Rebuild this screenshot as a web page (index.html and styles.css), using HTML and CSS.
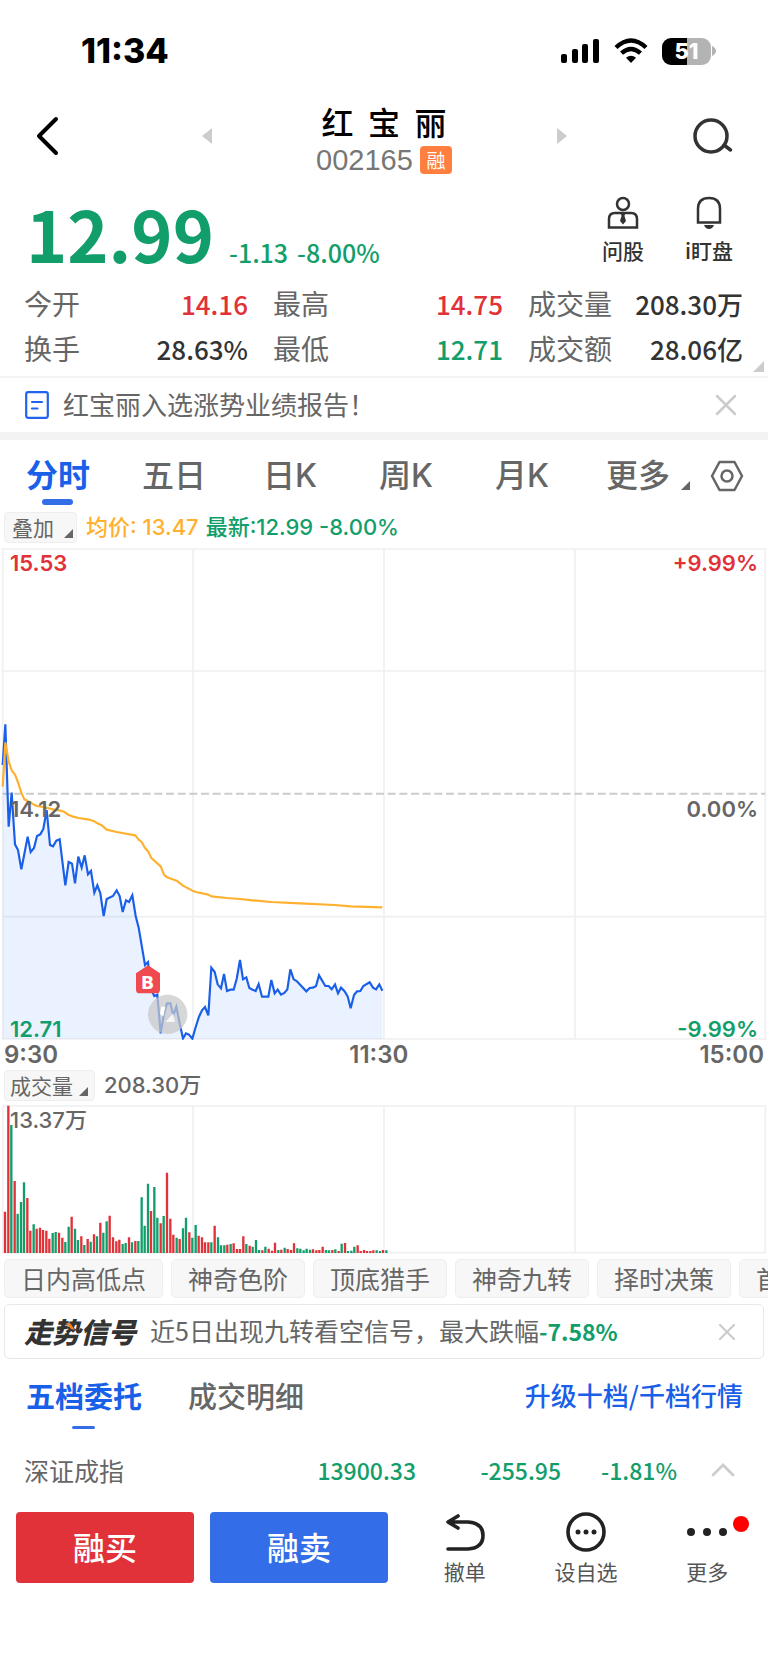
FILE: index.html
```html
<!DOCTYPE html>
<html lang="zh-CN">
<head>
<meta charset="utf-8">
<meta name="viewport" content="width=device-width, initial-scale=1">
<title>红宝丽 002165</title>
<link rel="stylesheet" href="styles.css">
</head>
<body>
<div class="status">
  <span class="clock">11:34</span>
  <div class="status-icons">
    <svg width="40" height="26" viewBox="0 0 40 26"><rect x="1" y="16" width="6" height="9" rx="2"/><rect x="12" y="11" width="6" height="14" rx="2"/><rect x="22" y="6" width="6" height="19" rx="2"/><rect x="33" y="1" width="6" height="24" rx="2"/></svg>
    <svg class="wifi" width="34" height="26" viewBox="0 0 34 26"><g fill="none" stroke="#000" stroke-width="4.4"><path d="M2 9.500Q17-4.500 32 9.500"/><path d="M7.500 15.200Q17 6.800 26.500 15.200"/></g><path d="M12 19.800Q17 15.800 22 19.800L17 25z"/></svg>
    <span class="battery"><span class="level">51</span><svg width="4" height="10" viewBox="0 0 4 10"><path d="M0 0Q4 2 4 5T0 10z" fill="#b3b3b3"/></svg></span>
  </div>
</div>

<header class="head">
  <button class="icon-btn" aria-label="返回"><svg width="24" height="40" viewBox="0 0 24 40"><path d="M21 3L4 20L21 37" fill="none" stroke="#000" stroke-width="4" stroke-linecap="round" stroke-linejoin="round"/></svg></button>
  <div class="switcher">
    <button class="icon-btn" aria-label="上一只"><svg width="10" height="16" viewBox="0 0 10 16"><path d="M10 0V16L0 8z" fill="#ccc"/></svg></button>
    <div class="title">
      <h1>红&nbsp; 宝&nbsp; 丽</h1>
      <div class="code"><span>002165</span><span class="badge">融</span></div>
    </div>
    <button class="icon-btn" aria-label="下一只"><svg width="10" height="16" viewBox="0 0 10 16"><path d="M0 0V16L10 8z" fill="#ccc"/></svg></button>
  </div>
  <button class="icon-btn search" aria-label="搜索"><svg width="40" height="38" viewBox="0 0 40 38"><g fill="none" stroke="#333" stroke-width="3.500" stroke-linecap="round"><circle cx="18" cy="19" r="16"/><path d="M31 28L37.500 33"/></g></svg></button>
</header>

<section class="quote">
  <div class="price"><strong>12.99</strong><span>-1.13</span><span>-8.00%</span></div>
  <div class="quick">
    <button><svg width="32" height="34" viewBox="0 0 32 34"><g fill="none" stroke="#333" stroke-width="2.500"><circle cx="16" cy="8" r="6"/><path d="M2 31.500V23Q2 17 8 17H24Q30 17 30 23V31.500z"/></g><path d="M14 18H18L17.500 20L19 25L16 28.500L13 25L14.500 20z" fill="#333"/></svg>问股</button>
    <button><svg width="28" height="34" viewBox="0 0 28 34"><path d="M3 26.500V13Q3 2 14 2T25 13V26.500z" fill="none" stroke="#333" stroke-width="2.500"/><path d="M9 29H19Q17.500 33 14 33T9 29z" fill="#333"/></svg>i盯盘</button>
  </div>
</section>

<dl class="stats">
  <div><dt>今开</dt><dd class="up">14.16</dd></div>
  <div><dt>最高</dt><dd class="up">14.75</dd></div>
  <div><dt>成交量</dt><dd>208.30万</dd></div>
  <div><dt>换手</dt><dd>28.63%</dd></div>
  <div><dt>最低</dt><dd class="down">12.71</dd></div>
  <div><dt>成交额</dt><dd>28.06亿</dd></div>
  <svg class="corner" width="11" height="11" viewBox="0 0 11 11"><path d="M11 0V11H0z" fill="#ccc"/></svg>
</dl>

<div class="notice">
  <svg width="24" height="28" viewBox="0 0 24 28"><g fill="none" stroke="#2163ee" stroke-width="2.200" stroke-linecap="round"><rect x="1.200" y="1.200" width="21.600" height="25.600" rx="2"/><path d="M7 11H17M7 17.500H12.500"/></g></svg>
  <a href="#">红宝丽入选涨势业绩报告！</a>
  <button class="icon-btn" aria-label="关闭"><svg width="22" height="22" viewBox="0 0 22 22"><path d="M2 2L20 20M20 2L2 20" stroke="#ccc" stroke-width="2.500" stroke-linecap="round"/></svg></button>
</div>

<nav class="periods">
  <button class="on">分时</button>
  <button>五日</button>
  <button>日K</button>
  <button>周K</button>
  <button>月K</button>
  <button class="more">更多<svg width="9" height="9" viewBox="0 0 9 9"><path d="M9 0V9H0z" fill="#666"/></svg></button>
  <button class="gear" aria-label="设置"><svg width="34" height="32" viewBox="0 0 34 32"><g fill="none" stroke="#666" stroke-width="2.500"><path d="M9.500 2H24.500L32 16L24.500 30H9.500L2 16z" stroke-linejoin="round"/><circle cx="17" cy="16" r="5.500"/></g></svg></button>
</nav>

<div class="info">
  <button class="drop">叠加<svg width="9" height="9" viewBox="0 0 9 9"><path d="M9 0V9H0z" fill="#666"/></svg></button>
  <span class="avg">均价: 13.47</span>
  <span class="down">最新:12.99 -8.00%</span>
</div>

<div class="chart">
  <svg viewBox="0 0 2304 1476" role="img" aria-label="分时走势">
    <g fill="none" stroke="#f0f0f0" stroke-width="5">
      <path d="M8 3H2296V1473H8zM8 369H2296M8 1106H2296M579 3V1473M1152 3V1473M1725 3V1473"/>
    </g>
    <path d="M8 737H2296" stroke="#ccc" stroke-width="6" stroke-dasharray="24 11"/>
    <polygon id="area" fill="#1a5fff" fill-opacity=".09"/>
    <polyline id="price" fill="none" stroke="#1a5fe8" stroke-width="6.500" stroke-linejoin="miter"/>
    <polyline id="avg" fill="none" stroke="#ffb02e" stroke-width="6.500" stroke-linejoin="round"/>
    <circle cx="503" cy="1399" r="59" fill="#c8c8c8" fill-opacity=".72"/>
    <path d="M480 1398L484 1376L496 1376L490 1405z" fill="#fff"/>
    <path d="M496 1422L520 1396L524 1422z" fill="#fff" fill-opacity=".8"/>
    <path d="M444 1252L480 1276V1325Q480 1336 469 1336H419Q408 1336 408 1325V1276z" fill="#ef4a50"/>
    <text class="mark" x="443" y="1322" text-anchor="middle">B</text>
  </svg>
  <span class="lab tl up">15.53</span><span class="lab tr up">+9.99%</span>
  <span class="lab ml">14.12</span><span class="lab mr">0.00%</span>
  <span class="lab bl down">12.71</span><span class="lab br down">-9.99%</span>
</div>
<div class="times"><span>9:30</span><span>11:30</span><span>15:00</span></div>

<div class="info vol-info">
  <button class="drop">成交量<svg width="9" height="9" viewBox="0 0 9 9"><path d="M9 0V9H0z" fill="#666"/></svg></button>
  <span>208.30万</span>
</div>
<div class="chart volume">
  <svg viewBox="0 0 2304 447" role="img" aria-label="成交量">
    <path d="M8 3H2296V443H8zM579 3V443M1152 3V443M1725 3V443" fill="none" stroke="#f0f0f0" stroke-width="5"/>
    <g stroke-width="7"><path id="vup" stroke="#e03238"/><path id="vdown" stroke="#129e6a"/></g>
  </svg>
  <span class="lab tl">13.37万</span>
</div>

<div class="chips">
  <button>日内高低点</button><button>神奇色阶</button><button>顶底猎手</button><button>神奇九转</button><button>择时决策</button><button>首板挖掘</button>
</div>

<div class="signal">
  <span class="logo">走势信号<svg width="9" height="8" viewBox="0 0 9 8"><path d="M0 0H4L9 7L5 6z" fill="#f58220"/></svg></span>
  <a href="#">近5日出现九转看空信号，最大跌幅<b>-7.58%</b></a>
  <button class="icon-btn" aria-label="关闭"><svg width="18" height="18" viewBox="0 0 18 18"><path d="M2 2L16 16M16 2L2 16" stroke="#ccc" stroke-width="2.200" stroke-linecap="round"/></svg></button>
</div>

<nav class="depth">
  <button class="on">五档委托</button>
  <button>成交明细</button>
  <a href="#">升级十档/千档行情</a>
</nav>

<div class="index">
  <span class="name">深证成指</span>
  <b>13900.33</b><b>-255.95</b><b class="rate">-1.81%</b>
  <button class="icon-btn" aria-label="展开"><svg width="24" height="15" viewBox="0 0 24 15"><path d="M2 13L12 3L22 13" fill="none" stroke="#ccc" stroke-width="2.800" stroke-linecap="round"/></svg></button>
</div>

<footer class="actions">
  <button class="trade buy">融买</button>
  <button class="trade sell">融卖</button>
  <div class="tools">
    <button><svg width="40" height="40" viewBox="0 0 40 40"><g fill="none" stroke="#222" stroke-width="3.600" stroke-linecap="round" stroke-linejoin="round"><path d="M13 4L3 10L13 16M4 10H23Q38 11 38 23.500T23 37H3"/></g></svg>撤单</button>
    <button><svg width="40" height="40" viewBox="0 0 40 40"><circle cx="20" cy="20" r="18" fill="none" stroke="#222" stroke-width="3.600"/><g fill="#222"><circle cx="12" cy="20" r="2.500"/><circle cx="20" cy="20" r="2.500"/><circle cx="28" cy="20" r="2.500"/></g></svg>设自选</button>
    <button><svg width="40" height="40" viewBox="0 0 40 40"><g fill="#222"><circle cx="4" cy="20" r="4"/><circle cx="20" cy="20" r="4"/><circle cx="36" cy="20" r="4"/></g></svg>更多<i class="dot"></i></button>
  </div>
</footer>
<script src="chart.js"></script>
</body>
</html>
```
FILE: styles.css
```css
* { box-sizing: border-box; }
body {
  margin: 0;
  background: #fff;
  color: #333;
  font-family: "Noto Sans CJK SC", sans-serif;
  overflow-x: hidden;
}
button {
  border: 0;
  padding: 0;
  background: none;
  color: inherit;
  font: inherit;
  white-space: nowrap;
}
a { color: inherit; text-decoration: none; }
svg { display: block; flex: none; }
h1, dl, dd { margin: 0; }
.up { color: #e03238; }
.down { color: #129e6a; }
.icon-btn { display: flex; }

.status {
  display: flex;
  justify-content: space-between;
  align-items: center;
  height: 102px;
  padding: 0 52px 0 81px;
}
.clock { font: 800 34px/40px Inter, sans-serif; color: #000; }
.status-icons { display: flex; align-items: center; gap: 14px; }
.battery { display: flex; align-items: center; gap: 1px; }
.level {
  width: 49px;
  height: 27px;
  border-radius: 9px;
  background: linear-gradient(90deg, #000 51%, #b3b3b3 51%);
  color: #fff;
  font: 800 22px/27px Inter, sans-serif;
  text-align: center;
}

.head {
  display: grid;
  grid-template-columns: 1fr 365px 1fr;
  height: 84px;
  padding: 0 35px;
}
.head .icon-btn { align-items: center; height: 68px; }
.switcher { display: flex; justify-content: space-between; }
.search { justify-self: end; }
.title { text-align: center; }
.title h1 { font: 500 32px/39px "Noto Sans CJK SC", sans-serif; color: #000; }
.code {
  display: flex;
  align-items: center;
  gap: 7px;
  font: 29px/38px "Liberation Sans", sans-serif;
  color: #777;
}
.badge {
  width: 32px;
  border-radius: 4px;
  background: #ff7f40;
  color: #fff;
  font: 19px/28px "Noto Sans CJK SC", sans-serif;
  text-align: center;
}

.quote {
  display: flex;
  justify-content: space-between;
  height: 92px;
  padding: 0 35px 0 26px;
}
.price {
  display: flex;
  align-items: baseline;
  gap: 9px;
  color: #129e6a;
  font-size: 25px;
  font-weight: 500;
  line-height: 93px;
}
.price strong { margin-right: 6px; font-size: 70px; font-weight: 700; }
.quick { display: flex; gap: 41px; padding-top: 10px; }
.quick button {
  display: flex;
  flex-direction: column;
  align-items: center;
  gap: 5px;
  font-size: 21px;
  font-weight: 500;
  line-height: 30px;
}

.stats {
  position: relative;
  display: grid;
  grid-template-columns: 224fr 230fr 215fr;
  column-gap: 25px;
  padding: 3px 25px 5px 24px;
  border-bottom: 2px solid #f3f3f3;
  font-size: 28px;
  line-height: 45px;
}
.stats div { display: flex; justify-content: space-between; }
.stats dt { color: #666; }
.stats dd { font-size: 26px; font-weight: 500; }
.corner { position: absolute; right: 4px; bottom: 4px; }

.notice {
  display: flex;
  align-items: center;
  gap: 14px;
  height: 62px;
  padding: 0 31px 0 25px;
  border-bottom: 8px solid #f3f3f3;
  color: #666;
  font-size: 26px;
  line-height: 34px;
}
.notice a, .signal a { flex: 1; white-space: nowrap; }
.notice a { padding-bottom: 2px; }

.periods {
  display: grid;
  grid-template-columns: repeat(6, 116fr) 72fr;
  height: 71px;
  padding-bottom: 5px;
  color: #666;
  font: 500 32px/60px Inter, "Noto Sans CJK SC", sans-serif;
}
.periods button {
  position: relative;
  display: flex;
  align-items: center;
  justify-content: center;
  padding-top: 5px;
}
.periods .gear { padding-right: 10px; }
.periods .on, .depth .on { color: #1a5fe8; font-weight: 700; }
.periods .on::after, .depth .on::after {
  content: "";
  position: absolute;
  left: 50%;
  bottom: 1px;
  width: 31px;
  height: 6px;
  margin-left: -16px;
  border-radius: 3px;
  background: #336ee8;
}
.periods .more { gap: 11px; padding-left: 20px; }
.more svg { margin-top: 20px; }

.info {
  display: flex;
  align-items: center;
  gap: 7px;
  height: 37px;
  padding: 0 4px 4px;
  font: 500 22px/31px Inter, "Noto Sans CJK SC", sans-serif;
}
.drop {
  display: flex;
  align-items: flex-end;
  gap: 10px;
  height: 31px;
  margin-right: 2px;
  padding: 0 3px 0 7px;
  border: 1px solid #eee;
  border-radius: 4px;
  background: #f7f7f7;
  color: #666;
  font: 21px/30px "Noto Sans CJK SC", sans-serif;
}
.drop svg { margin-bottom: 4px; }
.avg { color: #ffb02e; }

.chart { position: relative; }
.chart > svg { width: 100%; height: auto; }
.mark { fill: #fff; font: 700 52px "DejaVu Sans", sans-serif; }
.lab { position: absolute; font: 600 22px/30px Inter, "Noto Sans CJK SC", sans-serif; }
.tl { left: 10px; top: 0; }
.tr { right: 10px; top: 0; }
.ml { left: 10px; top: 50%; }
.mr { right: 10px; top: 50%; }
.bl { left: 10px; bottom: -4px; }
.br { right: 10px; bottom: -4px; }
.ml, .mr, .volume .lab, .vol-info span { color: #666; }
.volume .lab { font-weight: 500; }
.times {
  display: flex;
  justify-content: space-between;
  padding: 0 4px;
  color: #666;
  font: 600 24px/30px Inter, sans-serif;
}
.vol-info { height: 35px; }
.vol-info .drop { gap: 6px; padding: 0 6px 0 5px; }

.chips { display: flex; gap: 8px; padding: 5px 0 6px 4px; overflow: hidden; }
.chips button {
  height: 39px;
  padding: 0 16px;
  border: 1px solid #eee;
  border-radius: 5px;
  background: #f7f7f7;
  color: #666;
  font-size: 25px;
  line-height: 35px;
}
.signal {
  display: flex;
  align-items: center;
  gap: 14px;
  height: 55px;
  margin: 0 4px;
  padding: 0 27px 0 19px;
  border: 1px solid #e8e8e8;
  border-radius: 5px;
  color: #666;
  font-size: 25px;
  line-height: 36px;
}
.signal a, .logo { padding-bottom: 2px; }
.signal b { color: #129e6a; font-size: 23px; }
.logo { position: relative; color: #333; font-size: 28px; font-weight: 900; font-style: italic; }
.logo svg { position: absolute; left: 42px; top: 10px; }

.depth {
  display: flex;
  gap: 46px;
  height: 76px;
  padding: 0 25px 5px 26px;
  color: #666;
  font-size: 29px;
  font-weight: 500;
  line-height: 72px;
}
.depth a { margin-left: auto; color: #1a5fe8; font-size: 26px; }
.depth .on { position: relative; }
.depth .on::after { width: 23px; height: 3px; bottom: 1px; margin-left: -12px; }

.index {
  display: flex;
  align-items: center;
  height: 71px;
  padding: 0 33px 2px 24px;
  color: #666;
  font-size: 25px;
  line-height: 36px;
}
.index .name { flex: 1; }
.index b {
  width: 145px;
  color: #129e6a;
  font-size: 23px;
  font-weight: 500;
  text-align: right;
}
.index .rate { width: 116px; }
.index button { margin-left: 34px; }

.actions {
  display: grid;
  grid-template-columns: 178fr 178fr 364fr;
  gap: 16px;
  padding: 6px 0 76px 16px;
}
.trade {
  height: 71px;
  border-radius: 4px;
  padding-bottom: 4px;
  color: #fff;
  font-size: 32px;
  font-weight: 500;
  line-height: 66px;
}
.buy { background: #e03238; }
.sell { background: #336ee8; }
.tools { display: grid; grid-template-columns: repeat(3, 1fr); }
.tools button {
  position: relative;
  display: flex;
  flex-direction: column;
  align-items: center;
  gap: 4px;
  color: #555;
  font-size: 21px;
  line-height: 31px;
}
.dot {
  position: absolute;
  right: 19px;
  top: 4px;
  width: 16px;
  height: 16px;
  border-radius: 50%;
  background: #f00;
}
```
FILE: chart.js
```js
const price = "8,651 16,529 26,836 35,734 45,889 54,906 64,964 73,918 83,866 92,912 102,900 111,864 121,859 130,843 140,786 150,891 159,895 169,878 179,874 196,1012 206,942 216,947 225,1006 235,926 245,959 254,922 264,979 273,969 283,1034 292,1012 301,1036 311,1104 320,1053 339,1044 350,1027 359,1044 368,1092 378,1057 387,1062 397,1042 407,1104 416,1139 435,1251 444,1242 454,1326 463,1344 472,1340 482,1456 492,1396 501,1366 511,1366 520,1401 529,1376 540,1431 549,1471 558,1456 567,1460 577,1472 588,1434 597,1406 606,1387 615,1377 625,1402 634,1259 644,1272 653,1309 663,1321 672,1278 681,1329 691,1325 701,1325 710,1293 720,1236 729,1294 739,1288 748,1320 758,1325 767,1329 776,1308 786,1346 805,1346 814,1296 824,1336 833,1325 843,1340 853,1335 862,1324 871,1264 881,1294 890,1299 919,1330 929,1320 939,1319 948,1314 957,1282 976,1314 986,1314 995,1324 1005,1309 1014,1336 1023,1319 1033,1329 1043,1345 1052,1381 1062,1341 1071,1330 1081,1329 1090,1314 1109,1303 1119,1319 1128,1324 1138,1309 1147,1328";
const avg = "8,716 16,585 26,640 35,667 45,680 54,703 64,734 73,754 83,759 102,770 111,774 130,777 159,784 178,787 192,791 206,801 220,806 235,810 268,815 283,820 292,826 305,832 320,845 350,852 406,862 416,875 425,882 435,900 444,910 454,930 482,955 492,980 501,988 530,998 549,1013 577,1028 588,1032 625,1040 634,1045 680,1050 720,1053 758,1057 814,1062 900,1066 1004,1071 1052,1075 1147,1078";
document.getElementById("price").setAttribute("points", price);
document.getElementById("avg").setAttribute("points", avg);
document.getElementById("area").setAttribute("points", price + " 1147,1473 8,1473");

// One bar per minute: r = up, g = down, then the bar height in chart units.
const volume = "r124 r442 g384 r216 g118 g153 g212 r165 r67 g86 r73 r76 r69 r67 r43 g60 g63 r61 r46 g33 g79 r109 g73 g39 r50 g24 r42 g34 r56 g50 r91 g61 g95 r112 r47 r35 r40 g27 g30 r47 g32 r36 g36 g167 g82 g208 r126 g198 g106 r89 g111 r241 r103 r55 g46 r42 g74 g106 r62 g46 g84 r52 r47 r32 r32 g32 r82 g47 g23 g23 r25 g27 r29 r12 r12 r50 g27 r22 g19 g39 g9 r8 g19 r13 r7 r31 g9 r10 g16 r12 r9 r29 g14 g13 g8 g13 g10 r11 r8 r9 r19 g9 g8 r9 g11 r6 g28 r30 g6 g7 g19 r23 r6 r9 r6 r6 r8 g8 g6 r9 g8".split(" ");
const paths = { r: "", g: "" };
volume.forEach((v, i) => {
  paths[v[0]] += "M" + Math.round(15 + i * 9.53) + " 444v-" + v.slice(1);
});
document.getElementById("vup").setAttribute("d", paths.r);
document.getElementById("vdown").setAttribute("d", paths.g);
```
